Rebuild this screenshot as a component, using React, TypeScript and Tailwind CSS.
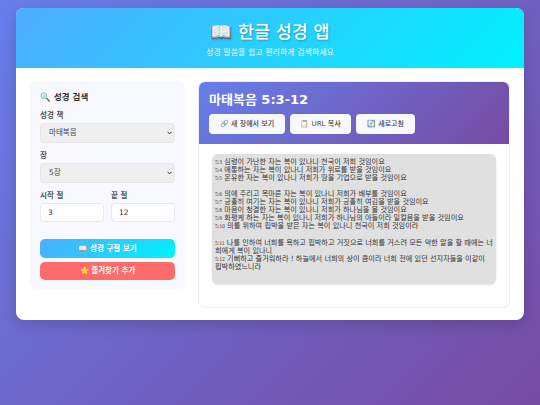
const kr = "font-['DejaVu_Sans','Noto_Sans_CJK_KR',sans-serif]";

function Verse({ n, t }: { n: string; t: string }) {
  return (
    <div>
      <span className="font-['Liberation_Serif',serif] text-[5.5px] text-[#444]">{n}</span> {t}
    </div>
  );
}

function Chevron() {
  return (
    <svg viewBox="0 0 8 6" className="pointer-events-none absolute top-[8px] right-[3px] h-[4px] w-[5px]" fill="none" stroke="#333" strokeWidth="1.6">
      <path d="M1 1.2 L4 4.4 L7 1.2" />
    </svg>
  );
}

function Pick({ v }: { v: string }) {
  return (
    <div className="relative mt-[2px]">
      <select defaultValue={v} className="block h-[20px] w-full appearance-none rounded-[4px] border border-[#e6e6e6] bg-[#efefef] pl-[8px] text-[7.5px] text-[#444]">
        <option>{v}</option>
      </select>
      <Chevron />
    </div>
  );
}

export default function App() {
  return (
    <div className={`${kr} min-h-[405px] bg-[linear-gradient(135deg,#667eea_0%,#764ba2_100%)] px-4 pt-2 pb-[84px]`}>
      <div className="w-[508px] overflow-hidden rounded-[8px] bg-white shadow-[0_5px_15px_rgba(0,0,0,0.15)]">
        <header className="h-[60px] bg-[linear-gradient(135deg,#4facfe_0%,#00f2fe_100%)] pt-[14px] text-center text-white">
          <h1 className="text-[17.5px] leading-[20px] font-medium [text-shadow:1px_1px_2px_rgba(0,0,0,0.25)]">📖 한글 성경 앱</h1>
          <p className="mt-[6px] text-[8px] leading-[9px] opacity-90">성경 말씀을 쉽고 편리하게 검색하세요</p>
        </header>
        <main className="flex gap-[13px] pt-[13px] pl-[14px] pb-[12px]">
          <aside className="h-[208px] w-[155px] rounded-[7px] bg-[#f8f9ff] px-[10px] pt-[10px]">
            <h3 className="text-[8.5px] leading-[12px] font-bold text-[#333]">🔍 성경 검색</h3>
            <label className="mt-[7px] block text-[7.5px] leading-[11px] font-bold text-[#555]">성경 책</label>
            <Pick v="마태복음" />
            <label className="mt-[7px] block text-[7.5px] leading-[11px] font-bold text-[#555]">장</label>
            <Pick v="5장" />
            <div className="mt-[7px] grid grid-cols-2 gap-[7px]">
              <div>
                <label className="block text-[7.5px] leading-[11px] font-bold text-[#555]">시작 절</label>
                <input readOnly value="3" className="mt-[2px] block h-[19px] w-full rounded-[4px] border border-[#e8e8f0] bg-white pl-[7px] text-[7.5px] text-[#333]" />
              </div>
              <div>
                <label className="block text-[7.5px] leading-[11px] font-bold text-[#555]">끝 절</label>
                <input readOnly value="12" className="mt-[2px] block h-[19px] w-full rounded-[4px] border border-[#e8e8f0] bg-white pl-[7px] text-[7.5px] text-[#333]" />
              </div>
            </div>
            <button className="mt-[17px] block h-[19px] w-full rounded-[5px] bg-[linear-gradient(135deg,#4facfe_0%,#00f2fe_100%)] text-[7.5px] font-bold text-white">📖 성경 구절 보기</button>
            <button className="mt-[4px] block h-[18px] w-full rounded-[5px] bg-[#ff6b6b] text-[7.5px] font-bold text-white">⭐ 즐겨찾기 추가</button>
          </aside>
          <section className="h-[227px] w-[312px] overflow-hidden rounded-[7px] border border-[#eeeeee]">
            <div className="h-[62px] bg-[linear-gradient(135deg,#667eea_0%,#764ba2_100%)] px-[10px] pt-[10px]">
              <h2 className="text-[13px] leading-[16px] font-bold text-white">마태복음 5:3-12</h2>
              <div className="mt-[6px] flex gap-[5px]">
                <button className="h-[20px] w-[76px] rounded-[4px] bg-[#f8f9ff] text-[7px] font-medium text-[#444]">🔗 새 창에서 보기</button>
                <button className="h-[20px] w-[61px] rounded-[4px] bg-[#f8f9ff] text-[7px] font-medium text-[#444]">📋 URL 복사</button>
                <button className="h-[20px] w-[59px] rounded-[4px] bg-[#f8f9ff] text-[7px] font-medium text-[#444]">🔄 새로고침</button>
              </div>
            </div>
            <div className="px-[13px] pt-[10px]">
              <div className="h-[130px] rounded-[6px] bg-[#e0e0e0] px-[3px] pt-[4px] text-[7.15px] leading-[8px] text-[#333] shadow-[0_1px_2px_rgba(0,0,0,0.12)]">
                <Verse n="5:3" t="심령이 가난한 자는 복이 있나니 천국이 저희 것임이요" />
                <Verse n="5:4" t="애통하는 자는 복이 있나니 저희가 위로를 받을 것임이요" />
                <Verse n="5:5" t="온유한 자는 복이 있나니 저희가 땅을 기업으로 받을 것임이요" />
                <div className="h-[8px]" />
                <Verse n="5:6" t="의에 주리고 목마른 자는 복이 있나니 저희가 배부를 것임이요" />
                <Verse n="5:7" t="긍휼히 여기는 자는 복이 있나니 저희가 긍휼히 여김을 받을 것임이요" />
                <Verse n="5:8" t="마음이 청결한 자는 복이 있나니 저희가 하나님을 볼 것임이요" />
                <Verse n="5:9" t="화평케 하는 자는 복이 있나니 저희가 하나님의 아들이라 일컬음을 받을 것임이요" />
                <Verse n="5:10" t="의를 위하여 핍박을 받은 자는 복이 있나니 천국이 저희 것임이라" />
                <div className="h-[9px]" />
                <Verse n="5:11" t="나를 인하여 너희를 욕하고 핍박하고 거짓으로 너희를 거스려 모든 악한 말을 할 때에는 너희에게 복이 있나니" />
                <Verse n="5:12" t="기뻐하고 즐거워하라 ! 하늘에서 너희의 상이 큼이라 너희 전에 있던 선지자들을 이같이 핍박하였느니라" />
              </div>
            </div>
          </section>
        </main>
      </div>
    </div>
  );
}
